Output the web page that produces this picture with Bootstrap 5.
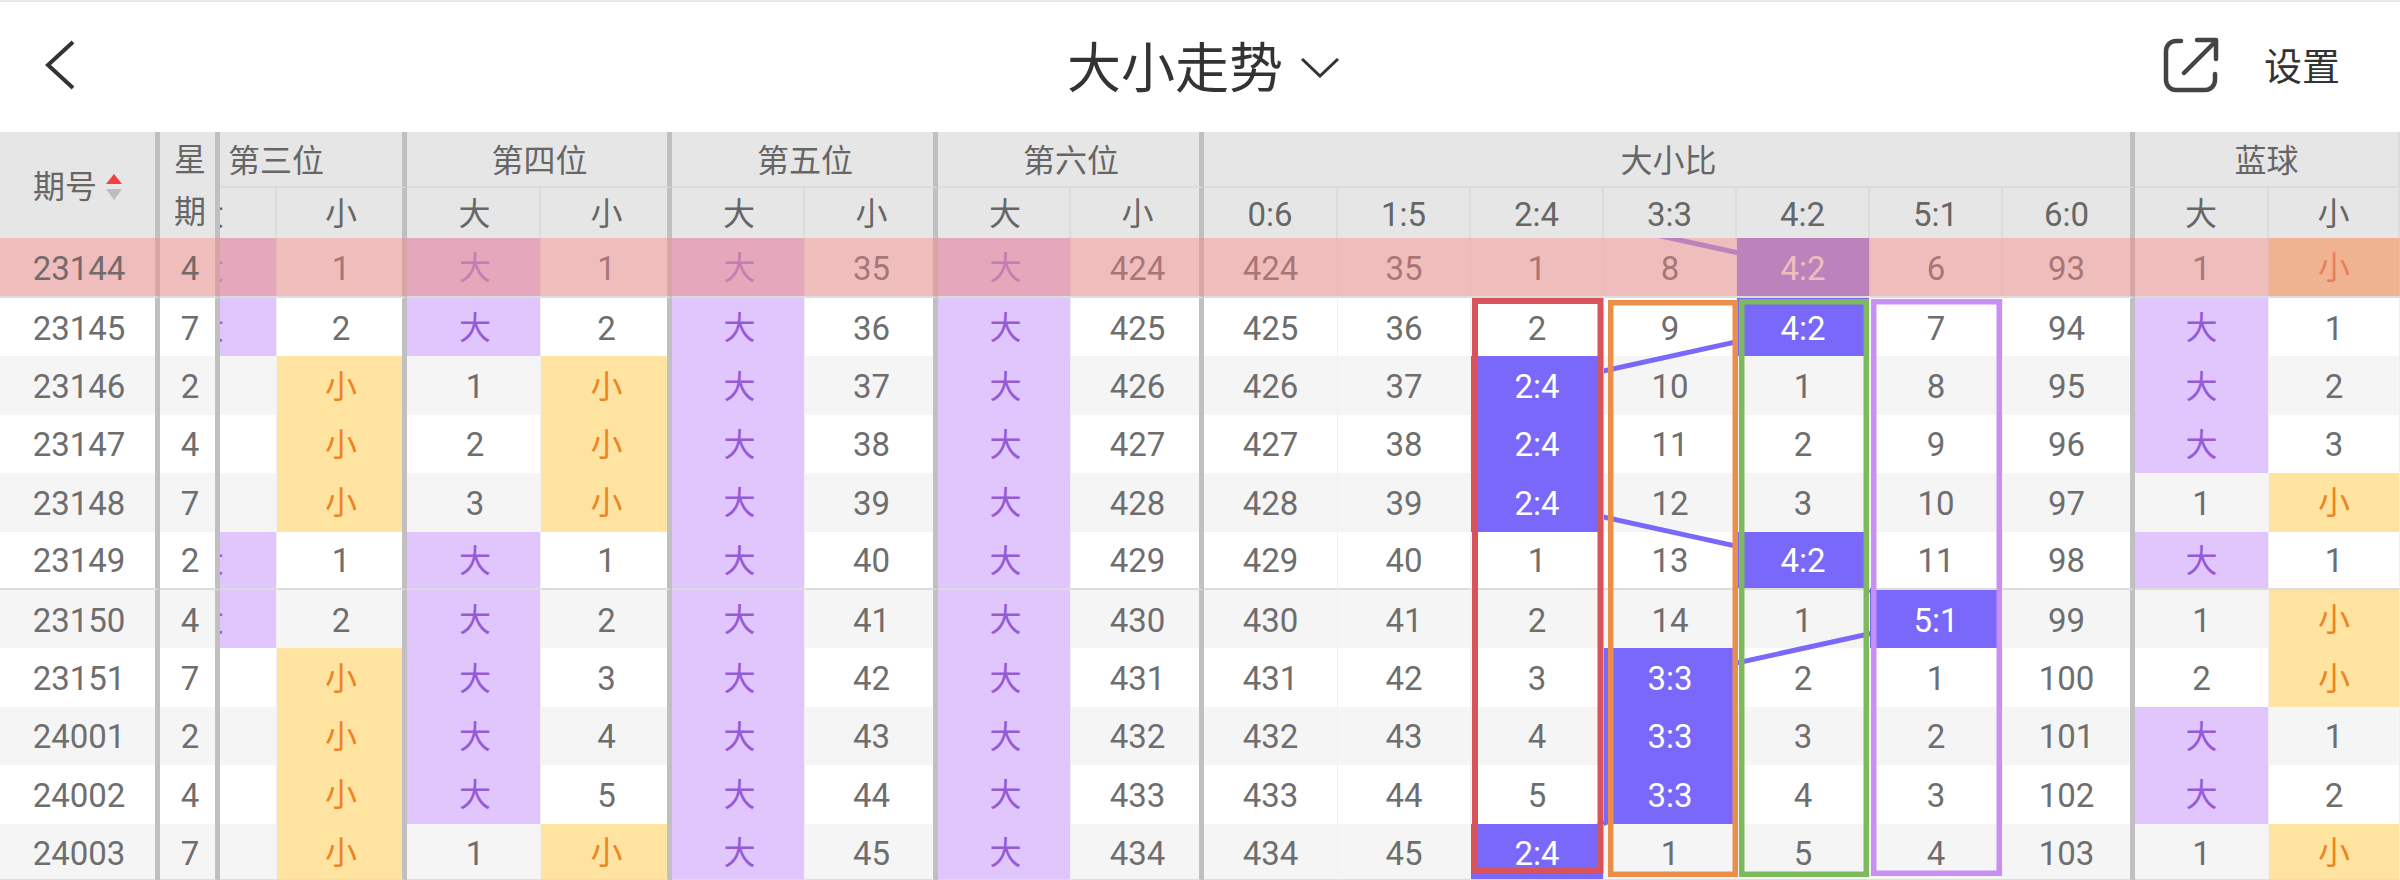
<!DOCTYPE html>
<html lang="zh-CN">
<head>
    <meta charset="UTF-8">
    <title>大小走势</title>
    <link href="https://cdn.jsdelivr.net/npm/bootstrap@5.3.0/dist/css/bootstrap.min.css" rel="stylesheet">
    <style>
        body { margin: 0; width: 2400px; height: 880px; overflow: hidden; background: #fff; font-family: Roboto, "Noto Sans CJK SC", sans-serif; }
        .top-head { height: 132px; border-top: 2px solid #e8e8e8; color: #333; padding-bottom: 4px; }
        .head-side { flex: 1 1 0; }
        .back-icon { margin-left: 45px; }
        .trend-title { font-size: 54px; line-height: 1; margin-left: 6px; font-family: "Noto Sans CJK SC", sans-serif; }
        .title-arrow { margin-left: 18px; margin-top: 6px; }
        .share-icon { margin-right: 45px; }
        .set-text { font-size: 38px; line-height: 1; margin-right: 60px; margin-top: -2px; font-family: "Noto Sans CJK SC", sans-serif; }
        .trend-wrap { position: relative; height: 748px; overflow: hidden; }
        .trend-table { table-layout: fixed; width: 2400px; border-collapse: separate; border-spacing: 0; --bs-table-bg: transparent; }
        .trend-table>:not(caption)>*>* { padding: 0; border-bottom: 0; text-align: center; vertical-align: middle; color: #6e6e6e; font-size: 33px; line-height: 1; font-weight: 400; overflow: hidden; white-space: nowrap; }
        .trend-table>thead>tr>th { position: relative; z-index: 2; background: #e6e6e6; font-size: 32px; color: #666; border-right: 2px solid #dcdcdc; }
        .trend-table>thead>tr:first-child>th { height: 56px; border-bottom: 2px solid #dcdcdc; padding-top: 3px; }
        .trend-table>thead>tr:last-child>th { height: 50px; padding-top: 2px; }
        .trend-table>thead>tr>th.num-head { font-size: 33px; }
        .trend-table>thead>tr:first-child>th.head-tall { border-bottom: 0; line-height: 52px; padding-top: 2px; }
        .trend-table>thead>tr:first-child>th.head-third { text-align: left; padding-left: 8px; }
        .trend-table>thead>tr>th.thick, .trend-table>tbody>tr>td.thick { border-right: 5px solid #c0c0c0; }
        .trend-table>thead>tr>th.nudge-a, .trend-table>tbody>tr>td.nudge-a { padding-left: 3px; }
        .trend-table>thead>tr>th.nudge-b, .trend-table>tbody>tr>td.nudge-b { padding-left: 5px; }
        .trend-table>tbody>tr>td { height: 58.4px; border-right: 1px solid #f0f0f0; background: #fff; padding-top: 2px; }
        .trend-table>tbody>tr:nth-child(odd)>td { background: #f5f5f5; }
        .trend-table>tbody>tr.first-row>td { height: 60px; border-bottom: 2px solid #dcdcdc; background: #fff; color: #484848; }
        .trend-table>tbody>tr.sep-row>td { border-bottom: 2px solid #dcdcdc; }
        .trend-table>tbody>tr.last-row>td { height: 58px; border-bottom: 3px solid #dedede; padding-top: 4px; }
        .trend-table>tbody>tr>td.cell-big, .trend-table>tbody>tr.first-row>td.cell-big { background: #e0c6fd; color: #955bd6; font-size: 32px; }
        .trend-table>tbody>tr>td.cell-small { background: #fee3a1; color: #ee8421; font-size: 32px; }
        .trend-table>tbody>tr.first-row>td.cell-small { background: #ffe690; color: #f05a00; font-size: 32px; }
        .trend-table>tbody>tr>td.cell-on, .trend-table>tbody>tr.first-row>td.cell-on { position: relative; z-index: 2; background: #7a68fb; color: #fff; }
        .clip-left { text-align: left !important; text-indent: -28px; }
        .sort-mark { display: inline-block; vertical-align: middle; margin-left: 9px; }
        .head-period { display: flex; align-items: center; justify-content: flex-start; padding-left: 33px; padding-top: 2px; line-height: 1; }
        .line-layer, .box-layer { position: absolute; left: 0; top: 0; pointer-events: none; }
        .line-layer { z-index: 1; }
        .box-layer { z-index: 3; }
        .hot-band { position: absolute; left: 0; top: 106px; width: 2400px; height: 58px; z-index: 4; background: rgba(231, 147, 147, .61); }
        .over-band { position: relative; z-index: 5; color: #756a6a; }
    </style>
</head>
<body>
    <div class="top-head d-flex align-items-center">
        <div class="head-side d-flex align-items-center">
            <svg class="back-icon" width="32" height="50" viewBox="0 0 32 50" fill="none" stroke="#333" stroke-width="4"><polyline points="28,2 3,25 28,48"/></svg>
        </div>
        <div class="d-flex align-items-center">
            <span class="trend-title">大小走势</span>
            <svg class="title-arrow" width="38" height="20" viewBox="0 0 38 20" fill="none" stroke="#333" stroke-width="3"><polyline points="1,1 19,18 37,1"/></svg>
        </div>
        <div class="head-side d-flex align-items-center justify-content-end">
            <svg class="share-icon" width="56" height="56" viewBox="0 0 56 56" fill="none" stroke="#444" stroke-width="4.5" stroke-linecap="round" stroke-linejoin="round">
                <path d="M18 4H13a10 10 0 0 0-10 10v29a10 10 0 0 0 10 10h29a10 10 0 0 0 10-10v-6"/>
                <path d="M21 36L53 4M34 3h19v19"/>
            </svg>
            <span class="set-text">设置</span>
        </div>
    </div>

    <div class="trend-wrap">
        <table class="table table-borderless mb-0 trend-table">
            <colgroup>
                <col style="width:160px"><col style="width:60px"><col style="width:57px"><col style="width:130px">
                <col style="width:134px"><col style="width:131px"><col style="width:133px"><col style="width:133px">
                <col style="width:133px"><col style="width:133px"><col style="width:134px"><col style="width:133px">
                <col style="width:133px"><col style="width:133px"><col style="width:133px"><col style="width:133px">
                <col style="width:132px"><col style="width:134px"><col style="width:131px">
            </colgroup>
            <thead>
                <tr>
                    <th rowspan="2" class="thick head-tall">
                        <div class="head-period">期号
                            <svg class="sort-mark" width="16" height="26" viewBox="0 0 16 26"><polygon points="8,0 16,10 0,10" fill="#f44040"/><polygon points="0,15 16,15 8,26" fill="#bdbdbd"/></svg>
                        </div>
                    </th>
                    <th rowspan="2" class="thick head-tall nudge-b">星<br>期</th>
                    <th colspan="2" class="thick head-third">第三位</th>
                    <th colspan="2" class="thick nudge-b">第四位</th>
                    <th colspan="2" class="thick nudge-b">第五位</th>
                    <th colspan="2" class="thick nudge-b">第六位</th>
                    <th colspan="7" class="thick nudge-a">大小比</th>
                    <th colspan="2">蓝球</th>
                </tr>
                <tr>
                    <th class="clip-left">大</th><th class="thick nudge-a">小</th>
                    <th class="nudge-a">大</th><th class="thick nudge-b">小</th>
                    <th class="nudge-a">大</th><th class="thick nudge-b">小</th>
                    <th class="nudge-a">大</th><th class="thick nudge-b">小</th>
                    <th class="num-head">0:6</th><th class="num-head">1:5</th><th class="num-head">2:4</th><th class="num-head">3:3</th><th class="num-head">4:2</th><th class="num-head">5:1</th><th class="num-head thick">6:0</th>
                    <th>大</th><th>小</th>
                </tr>
            </thead>
            <tbody id="trendBody"></tbody>
        </table>
        <svg class="line-layer" id="lineLayer" width="2400" height="748" viewBox="0 132 2400 748"></svg>
        <svg class="box-layer" width="2400" height="748" viewBox="0 132 2400 748" fill="none">
            <rect x="1475" y="301" width="125.5" height="570" stroke="#d9535a" stroke-width="6"/>
            <rect x="1610.75" y="302.75" width="124.5" height="571.5" stroke="#ea8f4a" stroke-width="5.5"/>
            <rect x="1741.75" y="301.75" width="124.5" height="572.5" stroke="#7fb95e" stroke-width="5.5"/>
            <rect x="1873.75" y="301.75" width="125.5" height="571.5" stroke="#c98ff5" stroke-width="5.5"/>
        </svg>
        <div class="hot-band"></div>
    </div>

    <script>
        const periods = ["23144","23145","23146","23147","23148","23149","23150","23151","24001","24002","24003"];
        const weeks = [4,7,2,4,7,2,4,7,2,4,7];
        const third = ["大","大","","","","大","大","","","",""];
        const thirdSmall = [1,2,"小","小","小",1,2,"小","小","小","小"];
        const fourBig = ["大","大",1,2,3,"大","大","大","大","大",1];
        const fourSmall = [1,2,"小","小","小",1,2,3,4,5,"小"];
        const blueBig = [1,"大","大","大",1,"大",1,2,"大","大",1];
        const blueSmall = ["小",1,2,3,"小",1,"小","小",1,2,"小"];
        const ratio24 = [1,2,"2:4","2:4","2:4",1,2,3,4,5,"2:4"];
        const ratio33 = [8,9,10,11,12,13,14,"3:3","3:3","3:3",1];
        const ratio42 = ["4:2","4:2",1,2,3,"4:2",1,2,3,4,5];
        const ratio51 = [6,7,8,9,10,11,"5:1",1,2,3,4];

        function makeCell(value, extra) {
            let cls = extra || "";
            if (value === "大") cls += " cell-big";
            if (value === "小") cls += " cell-small";
            if (String(value).includes(":")) cls += " cell-on";
            return `<td class="${cls}">${value}</td>`;
        }

        function renderBody() {
            let html = "";
            periods.forEach((p, i) => {
                let rowCls = i === 0 ? "first-row" : (i === 5 ? "sep-row" : (i === 10 ? "last-row" : ""));
                let firstCell = i === 0 ? `<span class="over-band">${p}</span>` : p;
                let weekCell = i === 0 ? `<span class="over-band">${weeks[i]}</span>` : weeks[i];
                html += `<tr class="${rowCls}">`;
                html += `<td class="thick nudge-a">${firstCell}</td><td class="thick nudge-b">${weekCell}</td>`;
                html += makeCell(third[i], "clip-left") + makeCell(thirdSmall[i], "thick nudge-a");
                html += makeCell(fourBig[i], "nudge-a") + makeCell(fourSmall[i], "thick nudge-b");
                html += makeCell("大", "nudge-a") + makeCell(35 + i, "thick nudge-b");
                html += makeCell("大", "nudge-a") + makeCell(424 + i, "thick nudge-b");
                html += makeCell(424 + i) + makeCell(35 + i);
                html += makeCell(ratio24[i]) + makeCell(ratio33[i]) + makeCell(ratio42[i]) + makeCell(ratio51[i]);
                html += makeCell(93 + i, "thick");
                html += makeCell(blueBig[i]) + makeCell(blueSmall[i]);
                html += "</tr>";
            });
            document.getElementById("trendBody").innerHTML = html;
        }

        // line runs through the centre of the lit cell in each row, first point is the row above the window
        function renderLine() {
            const xs = { "2:4": 1537, "3:3": 1670, "4:2": 1803, "5:1": 1936 };
            const lit = ["2:4","4:2","4:2","2:4","2:4","2:4","4:2","5:1","3:3","3:3","3:3","2:4"];
            const pts = lit.map((k, i) => {
                let y = i === 0 ? 209 : (i === 1 ? 267 : 298 + 58.4 * (i - 2 + 0.5));
                return xs[k] + "," + y;
            });
            document.getElementById("lineLayer").innerHTML =
                `<polyline points="${pts.join(" ")}" fill="none" stroke="#7a68fb" stroke-width="5"/>`;
        }

        renderBody();
        renderLine();
    </script>
    <script src="https://cdn.jsdelivr.net/npm/bootstrap@5.3.0/dist/js/bootstrap.bundle.min.js"></script>
</body>
</html>
